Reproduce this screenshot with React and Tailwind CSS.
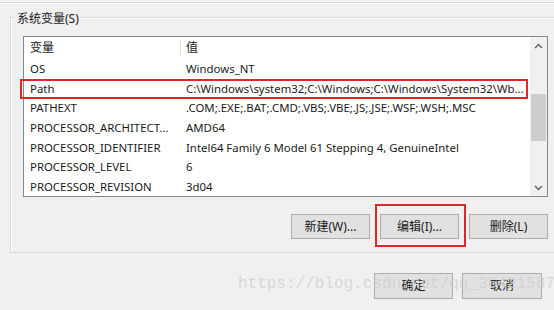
import React from "react";

const rows = [
  ["OS", "Windows_NT"],
  ["Path", "C:\\Windows\\system32;C:\\Windows;C:\\Windows\\System32\\Wb..."],
  ["PATHEXT", ".COM;.EXE;.BAT;.CMD;.VBS;.VBE;.JS;.JSE;.WSF;.WSH;.MSC"],
  ["PROCESSOR_ARCHITECT...", "AMD64"],
  ["PROCESSOR_IDENTIFIER", "Intel64 Family 6 Model 61 Stepping 4, GenuineIntel"],
  ["PROCESSOR_LEVEL", "6"],
  ["PROCESSOR_REVISION", "3d04"],
];

const font = { fontFamily: '"Segoe UI","Noto Sans","Noto Sans CJK SC",sans-serif' };

function Btn({ children, w = "w-[79px]", h = "h-[25px]" }) {
  return (
    <div
      className={`${w} ${h} flex items-center justify-center border border-[#adadad] bg-[#e1e1e1] text-[12px] text-[#1a1a1a]`}
    >
      {children}
    </div>
  );
}

export default function App() {
  return (
    <div
      className="relative w-[554px] h-[310px] overflow-hidden bg-[#f0f0f0]"
      style={font}
    >
      <div className="h-[3px] border-b border-[#dcdcdc]" />
      <div className="h-[1px] bg-white" />
      {/* group box */}
      <div className="relative ml-[10px] mt-[13px] w-[560px] h-[236px] border border-[#d9d9d9] shadow-[inset_1px_1px_0_#ffffff]">
        <div className="absolute left-[4px] top-[-8px] bg-[#f0f0f0] px-[2px] text-[12px] leading-[18px] text-[#1a1a1a]">
          系统变量(S)
        </div>
        {/* list */}
        <div className="ml-[12px] mt-[18px] w-[525px] h-[161px] border border-[#828790] bg-white flex">
          <div className="flex-1 flex flex-col text-[11.4px] text-[#1a1a1a] overflow-hidden">
            <div className="h-[22px] flex items-center text-[12px]">
              <div className="w-[156px] pl-[6px]">变量</div>
              <div className="h-[16px] w-px bg-[#e5e5e5]" />
              <div className="pl-[5px]">值</div>
            </div>
            {rows.map(([n, v]) => (
              <div key={n} className="h-[19.6px] flex items-center whitespace-nowrap">
                <div className="w-[157px] pl-[6px]">{n}</div>
                <div className="pl-[5px]">{v}</div>
              </div>
            ))}
          </div>
          {/* scrollbar */}
          <div className="w-[17px] bg-[#f0f0f0] flex flex-col items-center">
            <div className="h-[17px] flex items-center justify-center">
              <svg width="9" height="6" viewBox="0 0 9 6">
                <path d="M1 5 L4.5 1.5 L8 5" fill="none" stroke="#606060" strokeWidth="1.4" />
              </svg>
            </div>
            <div className="mt-[40px] w-[15px] h-[47px] bg-[#cdcdcd]" />
            <div className="flex-1" />
            <div className="h-[17px] flex items-center justify-center">
              <svg width="9" height="6" viewBox="0 0 9 6">
                <path d="M1 1 L4.5 4.5 L8 1" fill="none" stroke="#606060" strokeWidth="1.4" />
              </svg>
            </div>
          </div>
        </div>
        <div className="mt-[17px] w-[537px] flex justify-end gap-[10px]">
          <Btn>新建(W)...</Btn>
          <Btn>编辑(I)...</Btn>
          <Btn>删除(L)</Btn>
        </div>
      </div>
      <div className="mt-[20px] w-[542px] flex justify-end gap-[9px]">
        <Btn w="w-[79px]" h="h-[26px]">确定</Btn>
        <Btn w="w-[80px]" h="h-[26px]">取消</Btn>
      </div>
      {/* highlights */}
      <div className="absolute left-[20px] top-[79px] w-[508px] h-[20px] border-[2.5px] border-[#e0262b]" />
      <div className="absolute left-[375px] top-[204px] w-[91px] h-[43px] border-[2.5px] border-[#e0262b]" />
      {/* watermark */}
      <div
        className="absolute left-[238px] top-[274px] text-[16px] leading-[20px] text-[#d0d0d0]/80 whitespace-nowrap"
        style={{ fontFamily: '"Liberation Mono",monospace' }}
      >
        https://blog.csdn.net/qq_36421587
      </div>
    </div>
  );
}
